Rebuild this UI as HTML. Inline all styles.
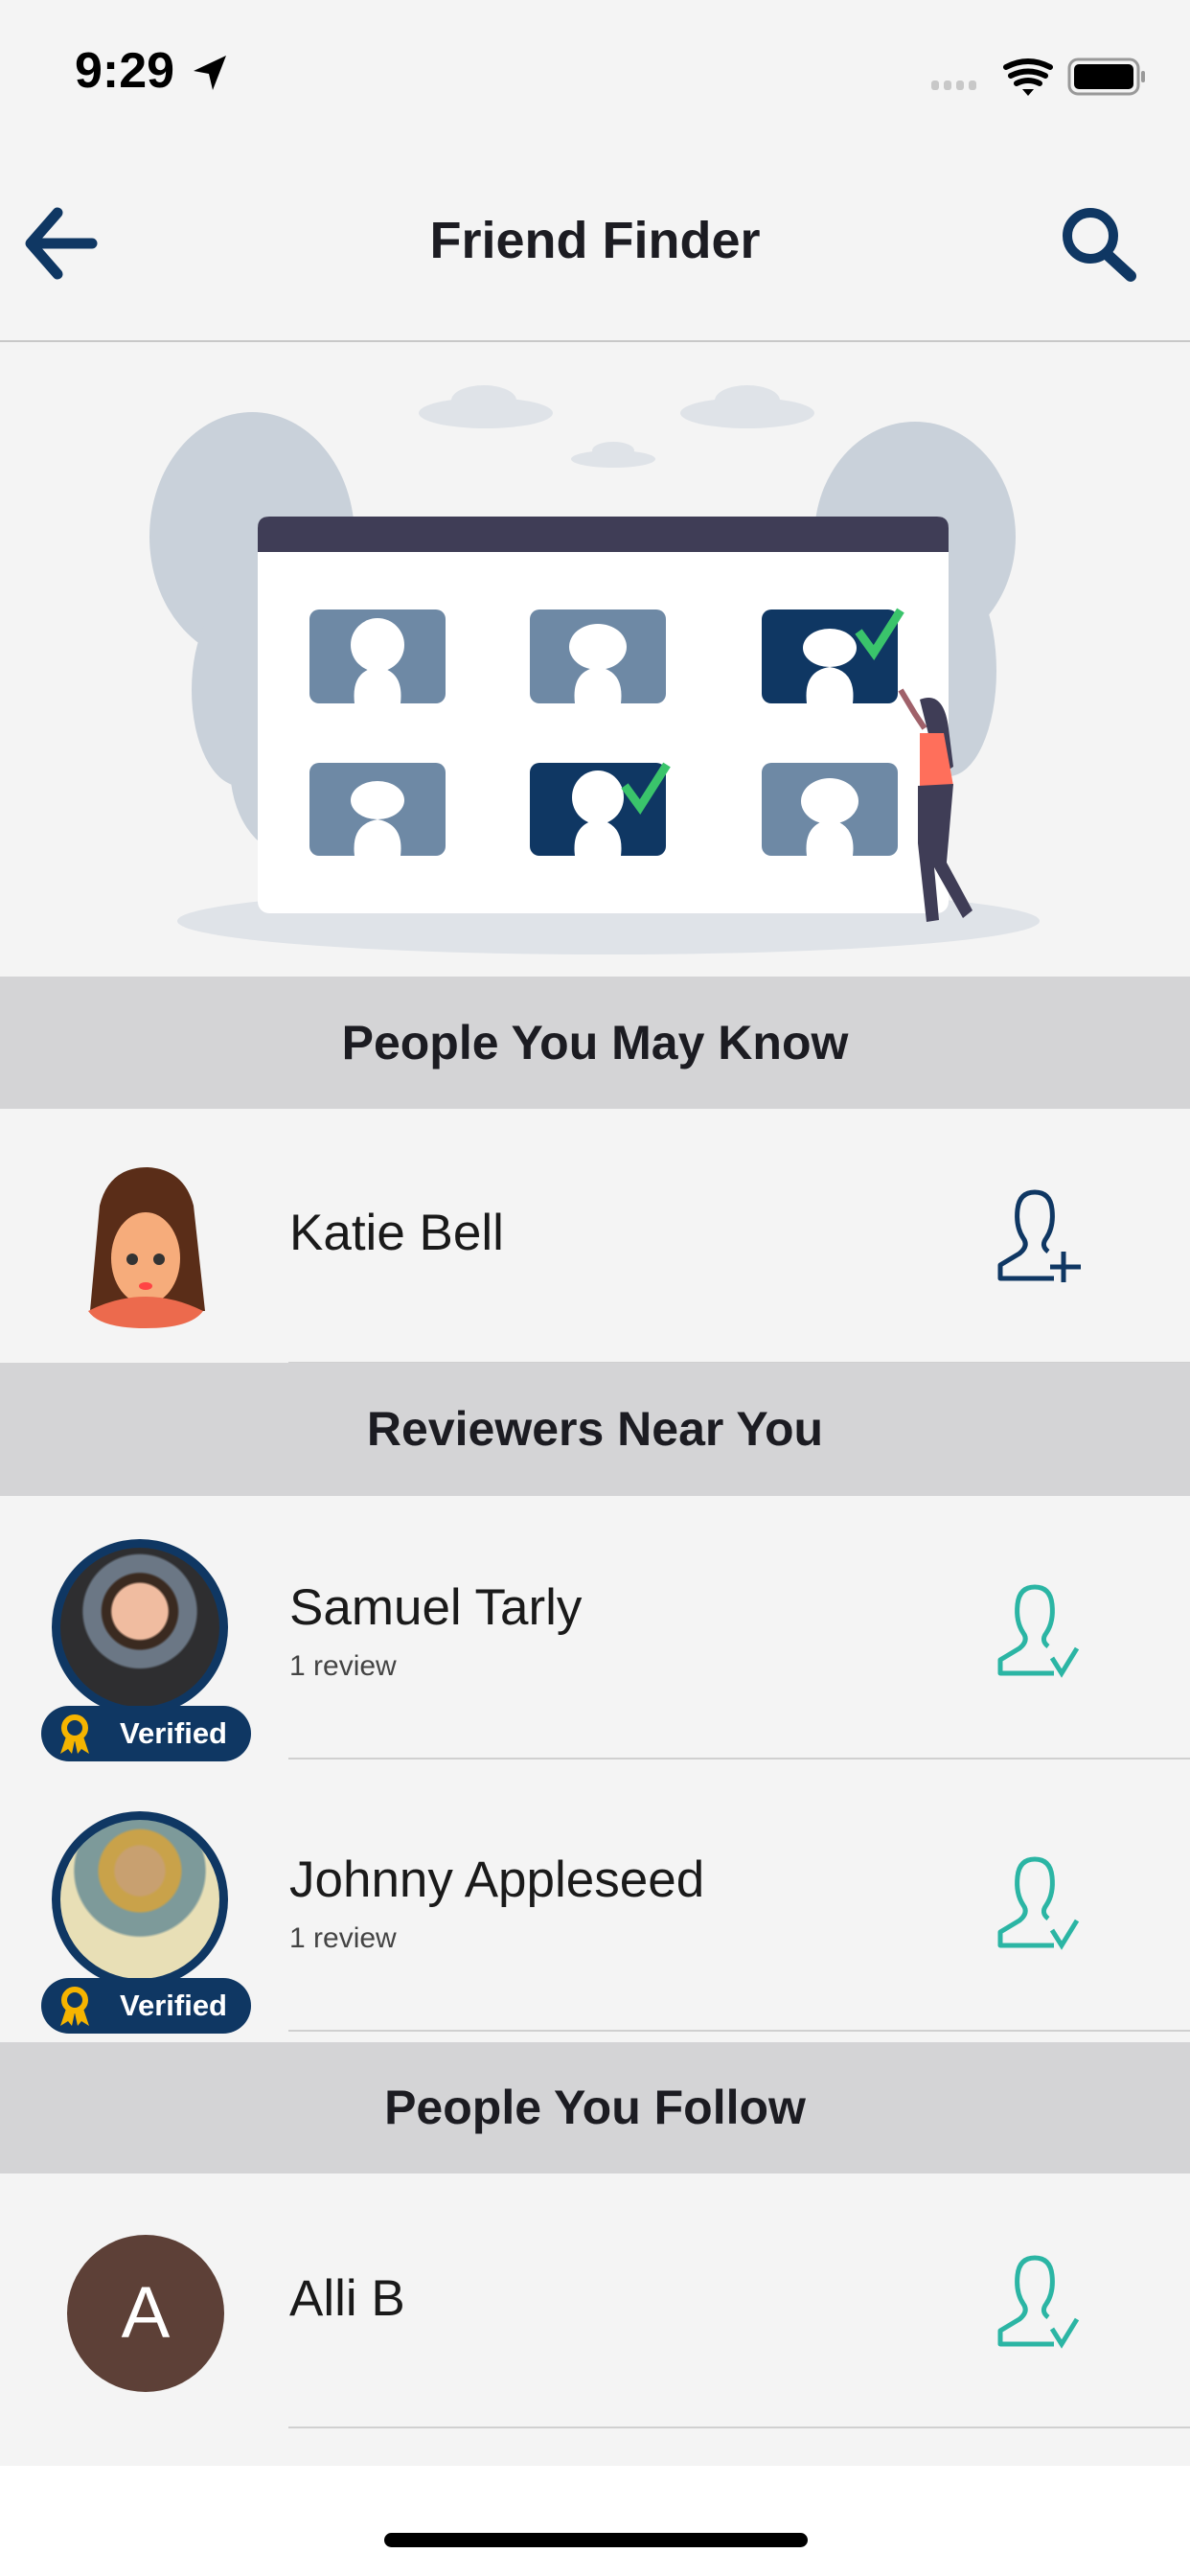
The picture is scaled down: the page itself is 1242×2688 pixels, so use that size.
<!DOCTYPE html>
<html><head><meta charset="utf-8"><style>
*{margin:0;padding:0;box-sizing:border-box}
body{width:1242px;height:2688px;background:#f4f4f4;position:relative;overflow:hidden;font-family:"Liberation Sans",sans-serif;color:#1a1a1a}
.a{position:absolute}
.hdr{position:absolute;left:0;width:1242px;background:#d4d4d6;text-align:center;font-weight:bold;font-size:50px;color:#1c1c22}
.name{position:absolute;left:302px;font-size:53px;color:#1a1a1a}
.sub{position:absolute;left:302px;font-size:30px;color:#444}
.div{position:absolute;left:301px;right:0;height:2px;background:#d0d0d0}
.badge{position:absolute;left:43px;width:219px;height:58px;border-radius:29px;background:#0f3763;color:#fff;font-weight:bold;font-size:31px;line-height:58px;padding-left:82px}
</style></head><body>
<div class="a" style="left:78px;top:44px;font-size:52px;font-weight:bold;color:#000">9:29</div>
<svg class="a" style="left:200px;top:56px" width="38" height="40" viewBox="0 0 38 40"><path d="M36 2 L2 18 L18 21 L22 38 Z" fill="#000"/></svg>
<svg class="a" style="left:970px;top:58px" width="230" height="52" viewBox="0 0 230 52">
<g fill="#c8c8c8"><rect x="2" y="26" width="8" height="10" rx="3"/><rect x="15" y="26" width="8" height="10" rx="3"/><rect x="28" y="26" width="8" height="10" rx="3"/><rect x="41" y="26" width="8" height="10" rx="3"/></g>
<path d="M80 12 Q103 0 126 12 M85 21 Q103 12 121 21 M91 29 Q103 23 115 29" stroke="#000" stroke-width="6" fill="none" stroke-linecap="round"/><path d="M97 35 L103 42 L109 35 Z" fill="#000"/>
<rect x="146" y="4" width="72" height="36" rx="9" fill="none" stroke="#999" stroke-width="3"/><rect x="151" y="9" width="62" height="26" rx="5" fill="#000"/><rect x="221" y="16" width="4" height="12" rx="2" fill="#999"/></svg>
<svg class="a" style="left:24px;top:216px" width="78" height="76" viewBox="0 0 78 76"><path d="M36 6 L8 38 L36 70 M10 38 L72 38" stroke="#0f3763" stroke-width="11" fill="none" stroke-linecap="round" stroke-linejoin="round"/></svg>
<div class="a" style="left:0;width:1242px;top:220px;text-align:center;font-size:54px;font-weight:bold;color:#1c1c22">Friend Finder</div>
<svg class="a" style="left:1104px;top:212px" width="90" height="86" viewBox="0 0 90 86"><circle cx="34" cy="34" r="24" stroke="#0f3763" stroke-width="10" fill="none"/><path d="M52 54 L76 76" stroke="#0f3763" stroke-width="12" stroke-linecap="round"/></svg>
<div class="a" style="left:0;top:355px;width:1242px;height:2px;background:#c8c8c8"></div>
<svg class="a" style="left:0;top:357px" width="1242" height="662" viewBox="0 357 1242 662">
<ellipse cx="635" cy="961" rx="450" ry="35" fill="#dfe3e8"/>
<g fill="#c9d1da"><ellipse cx="263" cy="560" rx="107" ry="130"/><ellipse cx="250" cy="720" rx="50" ry="100"/><ellipse cx="300" cy="800" rx="60" ry="90"/><ellipse cx="955" cy="560" rx="105" ry="120"/><ellipse cx="990" cy="700" rx="50" ry="110"/></g>
<g fill="#dfe3e8"><ellipse cx="507" cy="431" rx="70" ry="16"/><ellipse cx="505" cy="418" rx="34" ry="16"/><ellipse cx="780" cy="431" rx="70" ry="16"/><ellipse cx="780" cy="418" rx="34" ry="16"/><ellipse cx="640" cy="479" rx="44" ry="9"/><ellipse cx="640" cy="470" rx="22" ry="9"/></g>
<rect x="269" y="539" width="721" height="414" rx="12" fill="#fff"/>
<path d="M269 576 L269 551 Q269 539 281 539 L978 539 Q990 539 990 551 L990 576 Z" fill="#3f3d56"/>
<g>
<rect x="323" y="636" width="142" height="98" rx="10" fill="#6e89a5"/><rect x="553" y="636" width="142" height="98" rx="10" fill="#6e89a5"/><rect x="795" y="636" width="142" height="98" rx="10" fill="#0f3763"/>
<rect x="323" y="796" width="142" height="97" rx="10" fill="#6e89a5"/><rect x="553" y="796" width="142" height="97" rx="10" fill="#0f3763"/><rect x="795" y="796" width="142" height="97" rx="10" fill="#6e89a5"/>
</g>
<g fill="#fff">
<ellipse cx="394" cy="673" rx="28" ry="28"/><path d="M370 734 Q366 700 394 696 Q422 700 418 734Z"/>
<ellipse cx="624" cy="675" rx="30" ry="24"/><path d="M600 734 Q596 700 624 696 Q652 700 648 734Z"/>
<ellipse cx="866" cy="676" rx="28" ry="20"/><path d="M842 734 Q838 700 866 696 Q894 700 890 734Z"/>
<ellipse cx="394" cy="835" rx="28" ry="20"/><path d="M370 893 Q366 860 394 855 Q422 860 418 893Z"/>
<ellipse cx="624" cy="832" rx="27" ry="28"/><path d="M600 893 Q596 860 624 855 Q652 860 648 893Z"/>
<ellipse cx="866" cy="836" rx="30" ry="24"/><path d="M842 893 Q838 860 866 855 Q894 860 890 893Z"/>
</g>
<path d="M896 659 L912 681 L940 637 M652 820 L668 842 L696 798" stroke="#3ac46b" stroke-width="9" fill="none"/>
<path d="M940 720 L955 745 L965 760" stroke="#a0616a" stroke-width="6" fill="none"/>
<path d="M960 730 Q985 720 990 760 L995 800 L980 810 Z" fill="#3f3d56"/>
<path d="M960 765 L985 765 L995 820 L960 822 Z" fill="#ff6f5b"/>
<path d="M958 820 L995 818 L988 900 L1015 950 L1005 958 L975 905 L980 960 L967 962 L958 880 Z" fill="#3f3d56"/>
</svg>
<div class="hdr" style="top:1019px;height:138px;line-height:138px">People You May Know</div>
<svg class="a" style="left:84px;top:1218px" width="136" height="168" viewBox="0 0 136 168"><path d="M20 40 Q30 0 70 0 Q108 2 118 40 L130 150 L10 150 Z" fill="#5a2d18"/><ellipse cx="68" cy="95" rx="36" ry="48" fill="#f6ac7b"/><rect x="56" y="130" width="24" height="20" fill="#f6ac7b"/><path d="M8 150 Q68 120 128 150 Q115 168 68 168 Q20 168 8 150Z" fill="#ec6a4d"/><circle cx="54" cy="96" r="6" fill="#333"/><circle cx="82" cy="96" r="6" fill="#333"/><ellipse cx="68" cy="124" rx="7" ry="4" fill="#f44"/></svg>
<div class="name" style="top:1256px">Katie Bell</div>
<svg class="a" style="left:1034px;top:1240px" width="100" height="100" viewBox="0 0 100 100"><path d="M60 66 Q52 60 58 52 Q66 40 64 22 Q62 4 46 4 Q30 4 28 22 Q26 40 34 52 Q40 60 30 68 L10 80 L10 94 L66 94" stroke="#0f3763" stroke-width="5" fill="none" stroke-linejoin="round"/><path d="M76 66 L76 98 M62 82 L94 82" stroke="#0f3763" stroke-width="5"/></svg>
<div class="div" style="top:1421px"></div>
<div class="hdr" style="top:1422px;height:139px;line-height:139px">Reviewers Near You</div>

<div class="a" style="left:54px;top:1606px;width:184px;height:184px;border-radius:50%;background:#0f3763"></div>
<div class="a" style="left:63px;top:1615px;width:166px;height:166px;border-radius:50%;background:radial-gradient(circle at 50% 40%,#f0bca0 0 22%,#3a2a20 24% 30%,#6b7785 32% 45%,#2e2e30 47%)"></div>
<div class="badge" style="top:1780px">Verified</div>
<svg class="a" style="left:58px;top:1788px" width="40" height="44" viewBox="0 0 40 44"><circle cx="20" cy="15" r="11" fill="none" stroke="#f5b400" stroke-width="6"/><path d="M11 24 L5 42 L13 37 L17 42 L20 28 L23 42 L27 37 L35 42 L29 24" fill="#f5b400"/></svg>
<div class="name" style="top:1647px">Samuel Tarly</div>
<div class="sub" style="top:1722px">1 review</div>
<svg class="a" style="left:1034px;top:1652px" width="100" height="100" viewBox="0 0 100 100"><path d="M60 66 Q52 60 58 52 Q66 40 64 22 Q62 4 46 4 Q30 4 28 22 Q26 40 34 52 Q40 60 30 68 L10 80 L10 94 L66 94" stroke="#2bb5a4" stroke-width="5" fill="none" stroke-linejoin="round"/><path d="M64 78 L74 94 L90 68" stroke="#2bb5a4" stroke-width="5" fill="none"/></svg>
<div class="div" style="top:1834px"></div>

<div class="a" style="left:54px;top:1890px;width:184px;height:184px;border-radius:50%;background:#0f3763"></div>
<div class="a" style="left:63px;top:1899px;width:166px;height:166px;border-radius:50%;background:radial-gradient(circle at 50% 32%,#c8a070 0 18%,#c9a24a 20% 30%,#7d9a9a 32% 48%,#e8dfb6 50%)"></div>
<div class="badge" style="top:2064px">Verified</div>
<svg class="a" style="left:58px;top:2072px" width="40" height="44" viewBox="0 0 40 44"><circle cx="20" cy="15" r="11" fill="none" stroke="#f5b400" stroke-width="6"/><path d="M11 24 L5 42 L13 37 L17 42 L20 28 L23 42 L27 37 L35 42 L29 24" fill="#f5b400"/></svg>
<div class="name" style="top:1931px">Johnny Appleseed</div>
<div class="sub" style="top:2006px">1 review</div>
<svg class="a" style="left:1034px;top:1936px" width="100" height="100" viewBox="0 0 100 100"><path d="M60 66 Q52 60 58 52 Q66 40 64 22 Q62 4 46 4 Q30 4 28 22 Q26 40 34 52 Q40 60 30 68 L10 80 L10 94 L66 94" stroke="#2bb5a4" stroke-width="5" fill="none" stroke-linejoin="round"/><path d="M64 78 L74 94 L90 68" stroke="#2bb5a4" stroke-width="5" fill="none"/></svg>
<div class="div" style="top:2118px"></div>

<div class="hdr" style="top:2131px;height:137px;line-height:137px">People You Follow</div>
<div class="a" style="left:70px;top:2332px;width:164px;height:164px;border-radius:50%;background:#5d4037;color:#fff;font-size:76px;text-align:center;line-height:164px">A</div>
<div class="name" style="top:2368px">Alli B</div>
<svg class="a" style="left:1034px;top:2352px" width="100" height="100" viewBox="0 0 100 100"><path d="M60 66 Q52 60 58 52 Q66 40 64 22 Q62 4 46 4 Q30 4 28 22 Q26 40 34 52 Q40 60 30 68 L10 80 L10 94 L66 94" stroke="#2bb5a4" stroke-width="5" fill="none" stroke-linejoin="round"/><path d="M64 78 L74 94 L90 68" stroke="#2bb5a4" stroke-width="5" fill="none"/></svg>
<div class="div" style="top:2532px"></div>
<div class="a" style="left:0;top:2573px;width:1242px;height:115px;background:#fff"></div>
<div class="a" style="left:401px;top:2643px;width:442px;height:15px;border-radius:8px;background:#000"></div>
</body></html>
